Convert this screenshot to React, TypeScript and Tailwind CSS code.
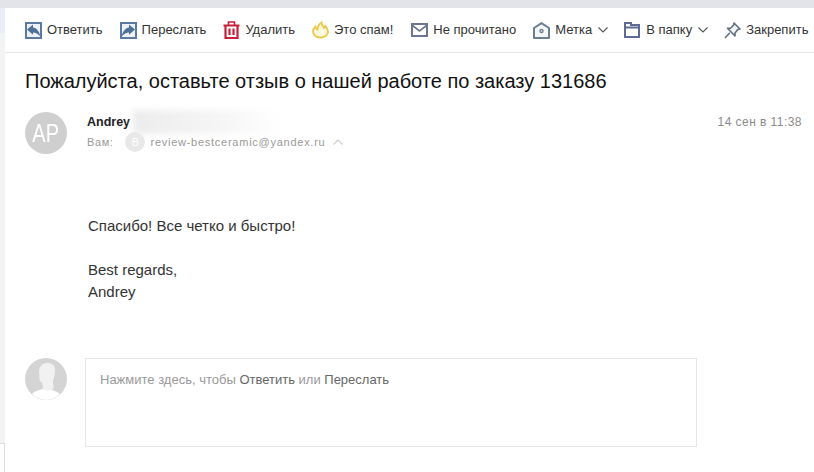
import React from "react";

const Reply = () => (
  <svg width="17" height="17" viewBox="0 0 17 17" fill="none">
    <rect x="1" y="1" width="15" height="15" fill="#eef2f7" stroke="#5b7aa3" strokeWidth="2" />
    <path d="M2 7.5 L8 2.5 V5.5 C11.5 6 14 9 15.5 14.5 C13 11.8 10.5 10.5 8 10.5 V12.8 Z" fill="#4f7096" />
  </svg>
);
const Forward = () => (
  <svg width="17" height="17" viewBox="0 0 17 17" fill="none">
    <rect x="1" y="1" width="15" height="15" fill="#eef2f7" stroke="#5b7aa3" strokeWidth="2" />
    <path d="M15 7.5 L9 2.5 V5.5 C5.5 6 3 9 1.5 14.5 C4 11.8 6.5 10.5 9 10.5 V12.8 Z" fill="#4f7096" />
  </svg>
);
const Trash = () => (
  <svg width="17" height="18" viewBox="0 0 17 18" fill="none">
    <path d="M0.5 4.5 H16.5" stroke="#c8203a" strokeWidth="2" />
    <path d="M5.5 4 V1 H11.5 V4" stroke="#c8203a" strokeWidth="1.6" />
    <path d="M2.5 4.5 V17 H14.5 V4.5" stroke="#c8203a" strokeWidth="2.2" />
    <path d="M6.5 7.5 V14 M10.5 7.5 V14" stroke="#c8203a" strokeWidth="2.2" />
  </svg>
);
const Flame = () => (
  <svg width="17" height="18" viewBox="0 0 17 18" fill="none">
    <path d="M8.5 16.5 C4 16.5 1 13.8 1 10.5 C1 8.5 2 7 3.5 5.5 C4 7 4.5 8 5.5 8.5 C5.5 5.5 7 3 9.5 1.5 C9.5 4 11 5 12 7 C12.7 6.5 13 6 13.2 5 C15 6.8 16 8.5 16 10.5 C16 13.8 13 16.5 8.5 16.5 Z" fill="#fff9e0" stroke="#ecc94b" strokeWidth="1.8" />
  </svg>
);
const Mail = () => (
  <svg width="17" height="14" viewBox="0 0 17 14" fill="none">
    <rect x="1" y="1" width="15" height="12" stroke="#6b7690" strokeWidth="2" />
    <path d="M1.5 2.5 L8.5 8 L15.5 2.5" stroke="#6b7690" strokeWidth="1.6" />
  </svg>
);
const Tag = () => (
  <svg width="17" height="17" viewBox="0 0 17 17" fill="none">
    <path d="M1 6 L8.5 1.2 L16 6 V16 H1 Z" fill="#f4f6f8" stroke="#6b7f93" strokeWidth="2" strokeLinejoin="round" />
    <circle cx="8.5" cy="9" r="2.2" fill="#6b7f93" />
    <circle cx="8.5" cy="9" r="0.8" fill="#fff" />
  </svg>
);
const Folder = () => (
  <svg width="16" height="16" viewBox="0 0 16 16" fill="none">
    <path d="M1 1 H7 V3 H15 V15 H1 Z" stroke="#5f6b95" strokeWidth="2" />
    <path d="M1 5.5 H15" stroke="#5f6b95" strokeWidth="2" />
  </svg>
);
const Pin = () => (
  <svg width="17" height="17" viewBox="0 0 17 17" fill="none">
    <path d="M10 1 L16 7 L13.8 7.6 L11 11 L11 14 L3.5 6.2 L6.5 6.2 L9.5 3.2 Z" fill="#f4f6f8" stroke="#5f6f80" strokeWidth="1.6" strokeLinejoin="round" />
    <path d="M5.8 10.8 L1 16" stroke="#5f6f80" strokeWidth="1.6" />
  </svg>
);
const Chevron = ({ color = "#555", w = 10 }: { color?: string; w?: number }) => (
  <svg width={w} height="6" viewBox="0 0 10 6" fill="none">
    <path d="M0.5 0.5 L5 5 L9.5 0.5" stroke={color} strokeWidth="1.1" />
  </svg>
);

const items: { icon: React.ReactNode; label: string; ml: string; chevron?: boolean }[] = [
  { icon: <Reply />, label: "Ответить", ml: "" },
  { icon: <Forward />, label: "Переслать", ml: "ml-[17px]" },
  { icon: <Trash />, label: "Удалить", ml: "ml-[17px]" },
  { icon: <Flame />, label: "Это спам!", ml: "ml-[17px]" },
  { icon: <Mail />, label: "Не прочитано", ml: "ml-[18px]" },
  { icon: <Tag />, label: "Метка", ml: "ml-[17px]", chevron: true },
  { icon: <Folder />, label: "В папку", ml: "ml-[16px]", chevron: true },
  { icon: <Pin />, label: "Закрепить", ml: "ml-[16px]" },
];

export default function App() {
  return (
    <div className="w-[814px] h-[472px] overflow-hidden flex flex-col bg-white font-['Liberation_Sans',Arial,sans-serif]">
      <div className="h-2 shrink-0 bg-[#e2e4e9]" />
      <div className="flex flex-1 min-h-0">
        <div className="w-[5px] shrink-0 flex flex-col">
          <div className="h-[25px] bg-[#e9edf6]" />
          <div className="h-[410px] bg-[#f1f3f4]" />
          <div className="flex-1 border-t border-r border-[#dddddd]" />
        </div>
        <div className="flex-1 min-w-0 flex flex-col">
          <div className="h-[45px] shrink-0 border-b border-[#e6e6e6] pl-5 flex items-center text-[13px] text-[#333] whitespace-nowrap">
            {items.map((it) => (
              <div key={it.label} className={`flex items-center shrink-0 ${it.ml}`}>
                <span className="w-[22px] flex items-center">{it.icon}</span>
                <span>{it.label}</span>
                {it.chevron && (
                  <span className="ml-[6px] flex items-center">
                    <Chevron />
                  </span>
                )}
              </div>
            ))}
          </div>

          <h1 className="mt-[16px] pl-5 text-[20px] leading-[24px] font-normal text-[#111]">
            Пожалуйста, оставьте отзыв о нашей работе по заказу 131686
          </h1>

          <div className="mt-[19px] pl-5 pr-3 flex items-start">
            <div className="w-[42px] h-[42px] rounded-full bg-[#cfcfcf] flex items-center justify-center shrink-0 overflow-hidden">
              <span className="text-white text-[25px] leading-none scale-x-[0.8]">AP</span>
            </div>
            <div className="ml-[20px] flex-1 min-w-0 pt-[1px]">
              <div className="flex items-center h-[18px]">
                <span className="text-[12.5px] font-bold text-[#222]">Andrey</span>
                <span className="ml-[3px] w-[150px] h-[24px] bg-[linear-gradient(90deg,#ececec,#f6f6f6_60%,#ffffff)] blur-[3px]" />
              </div>
              <div className="flex items-center mt-[1px] text-[11px] text-[#999]">
                <span className="tracking-[0.6px]">Вам:</span>
                <span className="ml-[12px] w-5 h-5 rounded-full bg-[#e8e8e8] text-white text-[11px] text-center leading-5">В</span>
                <span className="ml-[5px] tracking-[0.74px]">review-bestceramic@yandex.ru</span>
                <span className="ml-[8px] flex items-center rotate-180">
                  <Chevron color="#ccc" />
                </span>
              </div>
            </div>
            <span className="text-[12px] text-[#8a8a8a] mt-[1px] tracking-[0.45px] shrink-0">14 сен в 11:38</span>
          </div>

          <div className="mt-[61px] ml-[83px] text-[15px] leading-[22px] text-[#333]">
            <p>Спасибо! Все четко и быстро!</p>
            <p className="mt-[22px]">Best regards,</p>
            <p>Andrey</p>
          </div>

          <div className="mt-[55px] pl-5 flex items-start">
            <div className="w-[42px] h-[42px] rounded-full bg-[#d4d4d4] shrink-0 overflow-hidden">
              <svg width="42" height="42" viewBox="0 0 42 42">
                <path d="M7 36 C10 33 14 32 18 31 L27 32 C30 33 33 34 35 36 C31 40 26 42 21 42 C16 42 11 40 7 36 Z" fill="#ffffff" />
                <path d="M22 5 C27 5 30 7 30 12 C30 17 28.5 20 28 24 C28 27 29 29 28 31 C25 33 20 33 18 31 C18 28 18 25 15 23 C13.5 20 15 17 14 14 C14 9 17 5 22 5 Z" fill="#f1f1f1" />
              </svg>
            </div>
            <div className="ml-[18px] w-[612px] h-[89px] border border-[#e6e6e6] px-[14px] pt-[13px] text-[13px] leading-[16px] text-[#999]">
              Нажмите здесь, чтобы <span className="text-[#666]">Ответить</span> или <span className="text-[#666]">Переслать</span>
            </div>
          </div>
        </div>
      </div>
    </div>
  );
}
